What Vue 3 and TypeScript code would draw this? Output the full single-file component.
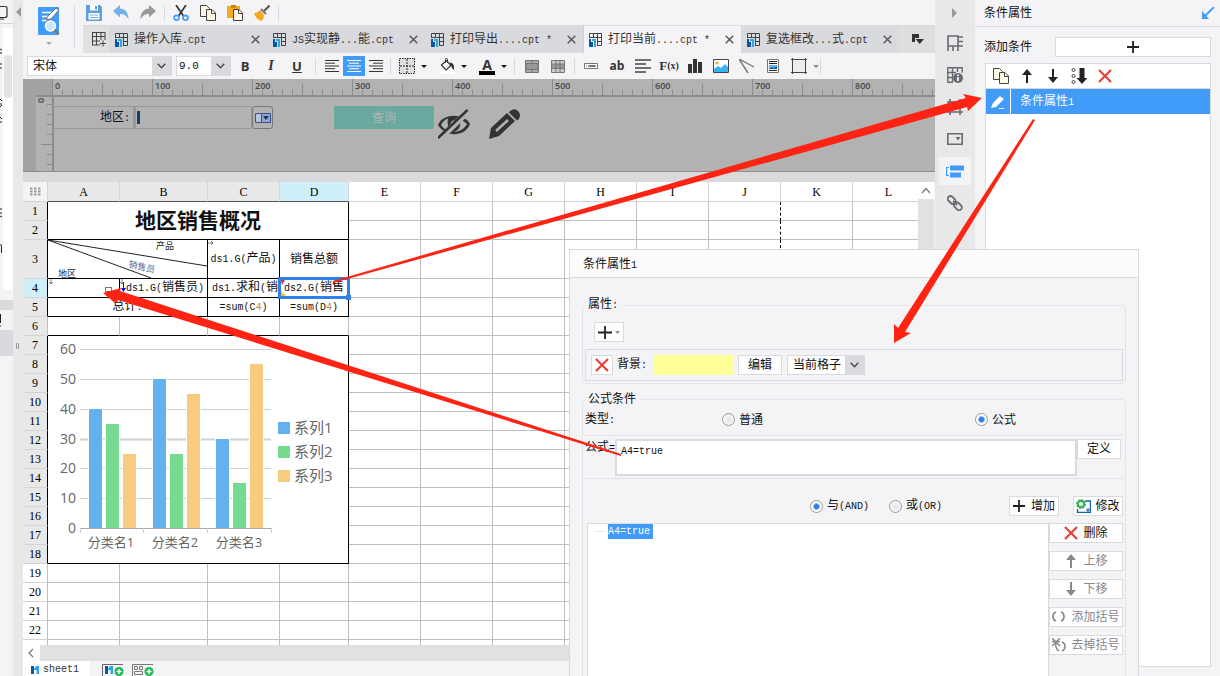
<script setup lang="ts">
import { h, ref, type FunctionalComponent } from 'vue'

// Splits a label into latin and CJK runs so that latin glyphs keep half-width advance.
const Mixed: FunctionalComponent<{ text: string }> = (props) => {
  const runs = props.text.match(/[\x00-\xff]+|[^\x00-\xff]+/g) ?? []
  return h(
    'span',
    { class: 'mixed' },
    runs.map((r) => h('span', { class: r.charCodeAt(0) < 256 ? 'lat' : 'han' }, r)),
  )
}
Mixed.props = ['text']

const tabs = [
  { name: '操作入库.cpt', active: false },
  { name: 'JS实现静...能.cpt', active: false },
  { name: '打印导出....cpt *', active: false },
  { name: '打印当前....cpt *', active: true },
  { name: '复选框改...式.cpt', active: false },
]

const columns = [
  { id: 'A', w: 'c72', state: 'used' },
  { id: 'B', w: 'c88', state: 'used' },
  { id: 'C', w: 'c72', state: 'used' },
  { id: 'D', w: 'c69', state: 'current' },
  { id: 'E', w: 'c72', state: '' },
  { id: 'F', w: 'c72', state: '' },
  { id: 'G', w: 'c72', state: '' },
  { id: 'H', w: 'c72', state: '' },
  { id: 'I', w: 'c72', state: '' },
  { id: 'J', w: 'c72', state: 'pagebreak' },
  { id: 'K', w: 'c72', state: '' },
  { id: 'L', w: 'c72', state: '' },
]
const plain = columns.slice(4)
const rows = Array.from({ length: 23 }, (_, i) => i + 1)

const rulerMarks = Array.from({ length: 200 }, (_, i) => i)
const rulerLabels = Array.from({ length: 9 }, (_, i) => i * 100)
const vMarks = [1, 2, 3, 4, 5, 6, 7]

const series = [
  { name: '系列1', color: '#63b2ee', values: [40, 50, 30] },
  { name: '系列2', color: '#76da91', values: [35, 25, 15] },
  { name: '系列3', color: '#f8cb7f', values: [25, 45, 55] },
]
const ticks = [0, 10, 20, 30, 40, 50, 60]
const yOf = (v: number) => Math.round(191 - v * 2.98)
const categories = ['分类名1', '分类名2', '分类名3']

const kind = ref('formula')
const join = ref('and')
const formula = ref('A4=true')
const font = ref('宋体')
const size = ref('9.0')
const scope = ref('当前格子')
</script>

<template>
  <div class="app">
    <aside class="left">
      <svg width="13" height="676" viewBox="0 0 13 676">
        <rect width="13" height="676" fill="#f4f4f6" />
        <path d="M0 23.5h13" stroke="#d4d4d6" />
        <path d="M0 6.500h5q2 0 2 2v7q0 2-2 2H0M0 19h4" fill="none" stroke="#333" stroke-width="1.200" />
        <rect x="3" y="28" width="10" height="262" fill="#fff" />
        <rect x="4" y="55" width="8" height="43" rx="3" fill="#e4e4e4" />
        <path d="M0 49l2 1M0 53h2M0 64h2M0 68h2M0 99l2 2M0 104h2M0 107l2-2M0 117l2 2M0 122h2M0 209h2M0 213h2M0 216l2 1M0 245h2M1.500 246v7" stroke="#222" />
        <rect y="300" width="13" height="10" fill="#dadadc" />
        <rect y="330" width="13" height="26" fill="#d9dade" />
        <path d="M.5 314v9M0 326h1" stroke="#222" />
      </svg>
    </aside>
    <div class="splitter">
      <svg width="10" height="360" viewBox="0 0 10 360">
        <path d="M8 7v10L3 12z" fill="#999" />
        <path d="M3.500 343v6M5.500 343v6" stroke="#999" />
      </svg>
    </div>

    <main class="main">
      <header class="top">
        <button class="preview" aria-label="预览">
          <svg width="24" height="38" viewBox="0 0 24 38">
            <rect x="0" y="0" width="21" height="28" rx="1" fill="#419bf9" />
            <path d="M4 5.500h11M4 9.500h8M4 13.500h5" stroke="#fff" stroke-width="1.500" />
            <path d="M8 13l2-4 8-8 3 2-8 9z" fill="#fff" stroke="#555" stroke-width=".8" />
            <circle cx="12.500" cy="19" r="5" fill="#cfe3f6" stroke="#fff" stroke-width="1.500" />
            <path d="M16.500 23l4 4" stroke="#777" stroke-width="2.500" />
            <path d="M8 35h6l-3 3z" fill="#aaa" />
          </svg>
        </button>
        <div class="top-right">
          <div class="quick">
            <button aria-label="保存"><svg width="16" height="16" viewBox="0 0 16 16"><path d="M0 0h14l2 2v14H0z" fill="#5f9fdc" /><path d="M4 0h8v5.500H4z" fill="#fff" /><path d="M9 1h2v3.500H9z" fill="#5f9fdc" /><path d="M2.500 8h11v6.500h-11z" fill="#fff" /><path d="M4 10h8M4 12.500h8" stroke="#7aaee0" /></svg></button>
            <button aria-label="撤销"><svg width="16" height="16" viewBox="0 0 16 16"><path d="M0 6L7 0v3.500c5 0 8.500 4 8.500 11C13.500 10.500 11 9 7 9v3.500z" fill="#74b0ea" /></svg></button>
            <button aria-label="重做"><svg width="16" height="16" viewBox="0 0 16 16"><path d="M16 6L9 0v3.500c-5 0-8.500 4-8.500 11C2.500 10.500 5 9 9 9v3.500z" fill="#999" /></svg></button>
            <i class="sep tall"></i>
            <button aria-label="剪切"><svg width="16" height="16" viewBox="0 0 16 16"><path d="M3 0l7.500 11M13 0L5.500 11" stroke="#333" stroke-width="1.700" /><circle cx="3.500" cy="12.700" r="2.400" fill="none" stroke="#419bf9" stroke-width="1.700" /><circle cx="12.500" cy="12.700" r="2.400" fill="none" stroke="#419bf9" stroke-width="1.700" /></svg></button>
            <button aria-label="复制"><svg width="16" height="16" viewBox="0 0 16 16"><path d="M.5.5h6l3 3v8h-9z" fill="#fff8e6" stroke="#444" /><path d="M6.500 4.500h5.500l3.500 3.500v7.500h-9z" fill="#fff8e6" stroke="#444" /><path d="M11.500 4.500v4h4" fill="none" stroke="#444" /></svg></button>
            <button aria-label="粘贴"><svg width="16" height="16" viewBox="0 0 16 16"><path d="M0 1h13v12H0z" fill="#f5a91d" /><path d="M4 0h5v3H4z" fill="#c98400" /><path d="M6.500 4.500h5.500l3.500 3.500v7.500h-9z" fill="#fff8e6" stroke="#444" /><path d="M11.500 4.500v4h4" fill="none" stroke="#444" /></svg></button>
            <button aria-label="格式刷"><svg width="16" height="16" viewBox="0 0 16 16"><path d="M15.500.5L10 6" stroke="#555" stroke-width="2" /><path d="M7 4l5 5" stroke="#777" stroke-width="2" /><path d="M0 8c3 0 4-1 6-3l4 5c0 3-1 5-3 6-3-1-6-4-7-8z" fill="#f5a91d" /></svg></button>
            <i class="sep tall"></i>
          </div>
          <nav class="tabs">
            <button class="newtab" aria-label="新建">
              <svg width="15" height="15" viewBox="0 0 15 15"><path d="M.5 1v12M0 .5h13M4.500 0v13M9 0v8M13 0v8M0 4.500h13M0 9h8M0 13h8M11 8.500v6M8 11.500h6" fill="none" stroke="#444" /></svg>
            </button>
            <div v-for="t in tabs" :key="t.name" class="tab" :class="{ on: t.active }">
              <svg width="13" height="14" viewBox="0 0 13 14"><path d="M.5 5V.5h12v12H8M0 4.500h13M4.500 0v5M8.500 0v13M8 8.500h5" fill="none" stroke="#444" /><path d="M0 6h2v3h2v5H0z" fill="#0b56a4" /><path d="M3 6h4v8H5V8H3z" fill="#2ea7e0" /></svg>
              <Mixed class="tab-name" :text="t.name" />
              <button class="close" aria-label="关闭"><svg width="9" height="9" viewBox="0 0 9 9"><path d="M.7.7l7.600 7.600M8.300.7L.7 8.300" stroke="#555" stroke-width="1.400" /></svg></button>
            </div>
            <button class="more" aria-label="更多"><svg width="13" height="11" viewBox="0 0 13 11"><path d="M0 0h7v4H3v4H0z" fill="#333" /><path d="M3.500 5H12L7.700 10z" fill="#333" /></svg></button>
          </nav>
        </div>
      </header>

      <div class="format">
        <label class="pick font"><select v-model="font" aria-label="字体"><option>宋体</option></select><span class="arr"><svg width="9" height="6" viewBox="0 0 9 6"><path d="M.7.7l3.800 4L8.300.7" fill="none" stroke="#444" stroke-width="1.300" /></svg></span></label>
        <label class="pick size"><select v-model="size" aria-label="字号"><option>9.0</option></select><span class="arr"><svg width="9" height="6" viewBox="0 0 9 6"><path d="M.7.7l3.800 4L8.300.7" fill="none" stroke="#444" stroke-width="1.300" /></svg></span></label>
        <button class="tb"><b>B</b></button>
        <button class="tb"><em>I</em></button>
        <button class="tb"><u>U</u></button>
        <i class="sep wide"></i>
        <button class="tb al" aria-label="左对齐"><svg width="14" height="12" viewBox="0 0 14 12"><path d="M0 .5h14M0 3.200h10M0 6h14M0 8.700h10M0 11.500h14" stroke="#333" /></svg></button>
        <button class="tb al on" aria-label="居中"><svg width="14" height="12" viewBox="0 0 14 12"><path d="M0 .5h14M2 3.200h10M0 6h14M2 8.700h10M0 11.500h14" stroke="#fff" /></svg></button>
        <button class="tb al" aria-label="右对齐"><svg width="14" height="12" viewBox="0 0 14 12"><path d="M0 .5h14M4 3.200h10M0 6h14M4 8.700h10M0 11.500h14" stroke="#333" /></svg></button>
        <i class="sep tight"></i>
        <button class="tb" aria-label="边框"><svg width="16" height="16" viewBox="0 0 16 16"><rect x="1" y="1" width="14" height="14" fill="#e0e0e2" /><path d="M.5 .5h15v15H.5z" fill="none" stroke="#222" stroke-dasharray="1.500 1" /><path d="M8 1v14M1 8h14" stroke="#222" stroke-dasharray="2 1" /></svg></button>
        <button class="caret" aria-label="边框选项"></button>
        <button class="tb" aria-label="填充"><svg width="16" height="16" viewBox="0 0 16 16"><path d="M2.500 7l5-4.500L12 7.500 7 12z" fill="#fff" stroke="#333" stroke-width="1.200" /><path d="M6.500 5V1.500q0-1 1-1t1 1V5" fill="none" stroke="#333" /><path d="M11 4.500c3 0 4.500 3 4 7-2 0-1.500-2.500-3.500-4z" fill="#333" /><path d="M0 13h16v3H0z" fill="#fff" /></svg></button>
        <button class="caret" aria-label="填充选项"></button>
        <button class="tb fc" aria-label="字体颜色"><b>A</b></button>
        <button class="caret" aria-label="颜色选项"></button>
        <i class="sep"></i>
        <button class="tb" aria-label="合并"><svg width="14" height="13" viewBox="0 0 14 13"><path d="M.5.5h13v12H.5zM7 0v3M7 10v3" fill="#aaa" stroke="#777" /><path d="M1 3.500h12v6H1z" fill="#999" stroke="#777" /></svg></button>
        <button class="tb" aria-label="取消合并"><svg width="14" height="13" viewBox="0 0 14 13"><path d="M.5.5h13v12H.5z" fill="#ccc" stroke="#777" /><path d="M1 4h12v4.500H1z" fill="#999" /><path d="M5 0v13M9 0v13M0 4h14M0 8.500h14" stroke="#777" /></svg></button>
        <i class="sep tight"></i>
        <button class="tb" aria-label="文本控件"><svg width="14" height="6" viewBox="0 0 14 6"><path d="M.5.5h13v5H.5z" fill="#fff" stroke="#777" /><path d="M2 3h1M4.500 2.500h7v1h-7z" stroke="#777" fill="none" /></svg></button>
        <button class="tb ab"><b>ab</b></button>
        <button class="tb" aria-label="富文本"><svg width="16" height="14" viewBox="0 0 16 14"><path d="M0 1h16M0 5h11M0 9h16M0 13h11" stroke="#444" stroke-width="1.700" /></svg></button>
        <button class="tb fx"><b>F</b>(x)</button>
        <button class="tb" aria-label="图表"><svg width="14" height="14" viewBox="0 0 14 14"><path d="M0 5h4v9H0zM5 0h4v14H5zM10 3h4v11h-4z" fill="#333" /></svg></button>
        <button class="tb" aria-label="图片"><svg width="16" height="14" viewBox="0 0 16 14"><path d="M.5.5h15v13H.5z" fill="#fff" stroke="#444" /><circle cx="4" cy="4" r="1.600" fill="#f5a91d" /><path d="M1 13v-3l4-3 3 2 4-4 3 3v5z" fill="#36b3f0" /></svg></button>
        <button class="tb" aria-label="斜线"><svg width="16" height="15" viewBox="0 0 16 15"><path d="M0 0l15 8M0 0l9 14" stroke="#777" stroke-width="1.400" /></svg></button>
        <button class="tb" aria-label="子报表"><svg width="12" height="14" viewBox="0 0 12 14"><path d="M.5.5h11v13H.5z" fill="#fff" stroke="#777" /><path d="M2 2.500h8M2 4.500h8M2 11.500h8" stroke="#222" /><path d="M2 6h8v4H2z" fill="#69b4f0" /><path d="M2 10l3-2 2 1 3-2v3z" fill="#0b56a4" /></svg></button>
        <button class="tb" aria-label="悬浮元素"><svg width="16" height="16" viewBox="0 0 16 16"><path d="M1.500 1.500h13v13h-13z" fill="#eee" /><path d="M1.500 0v16M14.500 0v16M0 1.500h16M0 14.500h16" stroke="#444" /></svg></button>
        <button class="caret dim" aria-label="悬浮选项"></button>
        <i class="sep wide"></i>
      </div>

      <section class="designer">
        <svg class="ruler" height="18">
          <rect width="30" height="18" fill="#a3a3a3" />
          <path v-for="m in rulerMarks" :key="m" :d="`M${m * 10 + 29.5} ${m % 10 === 0 ? 0 : m % 5 === 0 ? 5 : 11}V16`" stroke="#8c8c8c" />
          <text v-for="l in rulerLabels" :key="l" :x="l + 32" y="10">{{ l }}</text>
          <rect x="13" y="16" width="100%" height="2" fill="#8c8c8c" />
        </svg>
        <div class="canvas">
          <svg class="vruler" width="31" height="75" viewBox="0 0 31 75">
            <rect width="13" height="75" fill="#a3a3a3" />
            <path v-for="m in vMarks" :key="m" :d="`M${m === 5 ? 18 : 24} ${m * 10 - 2.5}H29`" stroke="#8c8c8c" />
            <path d="M30 0v75" stroke="#8c8c8c" stroke-width="2" />
            <text transform="translate(21 6) rotate(-90)">0</text>
          </svg>
          <div class="form">
            <label class="flabel" for="area"><Mixed text="地区:" /></label>
            <input id="area" class="finput" />
            <button class="fdrop" aria-label="展开"><svg width="16" height="10" viewBox="0 0 16 10"><path d="M.5.5h6v9h-6z" fill="#b8c4dc" stroke="#3a5488" /><path d="M6.500.5h9v9h-9z" fill="#8ea6d0" stroke="#3a5488" /><path d="M8 3h6l-3 4z" fill="#1c2f66" /></svg></button>
            <button class="query">查询</button>
            <svg class="eye" width="32" height="31" viewBox="0 0 32 31"><path d="M0 16C5 4 26 4 32 15 27 28 8 29 0 16z" fill="#333" /><path d="M3 16Q6 10.500 10 9.500q-2 8 4 12.500Q7 22 3 16zM22 11q5 1 7 4.500-5 7-13 7.500 8-3 6-12z" fill="#b2b2b2" /><path d="M16 12q-3 1-3 5" fill="none" stroke="#b2b2b2" stroke-width="1.500" /><path d="M1 30.500L31 1.500" stroke="#b2b2b2" stroke-width="6" /><path d="M0 29L29.500 1" stroke="#333" stroke-width="2.500" /></svg>
            <svg class="pen" width="31" height="31" viewBox="0 0 31 31"><path d="M0 30L2 19 18 4l8 8L10 27z" fill="#333" /><path d="M20 3q5-5 9-1t0 9l-2 1-8-8z" fill="#333" /><path d="M18 2.500L28 12.500" stroke="#b2b2b2" stroke-width="1.500" /><path d="M7 22L19 11" stroke="#b2b2b2" stroke-width="2.500" /></svg>
          </div>
        </div>
      </section>

      <section class="sheet">
        <div class="gridwrap">
          <table class="grid">
            <colgroup><col class="c25" /><col v-for="c in columns" :key="c.id" :class="c.w" /></colgroup>
            <thead>
              <tr>
                <th class="corner"><svg width="11" height="9" viewBox="0 0 11 9"><path d="M0 1.500h11M0 4.500h11M0 7.500h11" stroke="#999" stroke-width="2" stroke-dasharray="2.500 1.500" /></svg></th>
                <th v-for="c in columns" :key="c.id" :class="c.state === 'pagebreak' ? '' : c.state">{{ c.id }}</th>
              </tr>
            </thead>
            <tbody>
              <tr v-for="r in rows" :key="r" :class="{ high: r === 3 }">
                <th :class="{ used: r < 19, current: r === 4, edge: r < 19 && r !== 6 }">{{ r }}</th>
                <td v-if="r === 1" class="title black" colspan="4" rowspan="2">地区销售概况</td>
                <template v-if="r === 3">
                  <td class="black" colspan="2">
                    <svg class="diag" width="159" height="38" viewBox="0 0 159 38"><path d="M0 0l159 26M0 0l103 38" stroke="#222" /><text x="108" y="9">产品</text><text x="80" y="27" transform="rotate(13 80 27)" class="sales">销售员</text><text x="10" y="37">地区</text></svg>
                  </td>
                  <td class="black"><svg class="leaf" width="6" height="6" viewBox="0 0 6 6"><path d="M0 3h5M3 1l2 2-2 2" fill="none" stroke="#777" /></svg><div class="clip"><Mixed text="ds1.G(产品)" /></div></td>
                  <td class="black"><div class="clip">销售总额</div></td>
                </template>
                <template v-if="r === 4">
                  <td class="black"><svg class="leaf" width="6" height="6" viewBox="0 0 6 6"><path d="M3 0v5M1 3l2 2 2-2" fill="none" stroke="#777" /></svg><i class="box"></i></td>
                  <td class="black"><svg class="leaf" width="6" height="14" viewBox="0 0 6 14"><path d="M2 0v5M0 3l2 2 2-2" fill="none" stroke="#777" /><path d="M3.500 3v8" stroke="#00f" /><path d="M1 9h5l-2.500 4z" fill="#00f" /></svg><div class="clip end"><Mixed text="ds1.G(销售员)" /></div></td>
                  <td class="black"><div class="clip start"><Mixed text="ds1.求和(销" /></div></td>
                  <td class="black"><div class="clip start"><Mixed text="ds2.G(销售" /></div><div class="selected"><svg width="5" height="16" viewBox="0 0 5 16"><path d="M0 0h4L1 5z" fill="#c0392b" /><path d="M0 11l5 5H0z" fill="#f5c518" /></svg></div></td>
                </template>
                <template v-if="r === 5">
                  <td class="black" colspan="2"><Mixed text="总计:" /></td>
                  <td class="black"><span class="lat">=sum(C<s>4</s>)</span></td>
                  <td class="black"><span class="lat">=sum(D<s>4</s>)</span></td>
                </template>
                <td v-if="r === 7" class="black" colspan="4" rowspan="12">
                  <svg class="chart" width="300" height="226" viewBox="0 0 300 226">
                    <g v-for="t in ticks" :key="t">
                      <path :d="`M32 ${yOf(t) + 0.5}H223`" :stroke="t ? '#cfcfcf' : '#aaa'" :stroke-width="t === 30 ? 2 : 1" />
                      <text x="28" :y="yOf(t) + 5" text-anchor="end" class="num">{{ t }}</text>
                    </g>
                    <path d="M32.500 191v5M95.500 191v5M159.500 191v5M223.500 191v5" stroke="#ccc" />
                    <template v-for="(s, i) in series" :key="s.name">
                      <rect v-for="(v, j) in s.values" :key="j" :x="40 + i * 17 + Math.round(j * 63.5)" :y="yOf(v) - 1" width="15" :height="192 - yOf(v)" fill="#fff" />
                      <rect v-for="(v, j) in s.values" :key="'b' + j" :x="41 + i * 17 + Math.round(j * 63.5)" :y="yOf(v)" width="13" :height="191 - yOf(v)" :fill="s.color" />
                      <rect x="230" :y="85 + i * 24" width="12" height="12" :fill="s.color" />
                      <text x="246" :y="96 + i * 24" class="leg">{{ s.name }}</text>
                    </template>
                    <text v-for="(c, i) in categories" :key="c" :x="63 + i * 64" y="210" text-anchor="middle" class="cat">{{ c }}</text>
                  </svg>
                </td>
                <template v-if="r === 6 || r > 18">
                  <td v-for="n in 4" :key="n" :class="{ under: r === 6 }"></td>
                </template>
                <td v-for="c in plain" :key="c.id" :class="c.state"></td>
              </tr>
            </tbody>
          </table>
        </div>
        <div class="vscroll"><svg width="16" height="17" viewBox="0 0 16 17"><rect width="16" height="17" fill="#fff" /><path d="M4 11l4-4.500 4 4.500" fill="none" stroke="#777" stroke-width="1.200" /></svg></div>
      </section>
      <div class="hscroll"><svg width="17" height="16" viewBox="0 0 17 16"><rect width="17" height="16" fill="#fff" /><path d="M10 4L6 8l4 4" fill="none" stroke="#777" stroke-width="1.200" /></svg></div>
      <footer class="sheets">
        <button class="sheet-tab"><svg width="8" height="8" viewBox="0 0 8 8"><path d="M0 0h3v8H0z" fill="#0b56a4" /><path d="M3 3l2-3h3v8H5.500V4H3z" fill="#2ea7e0" /></svg><span class="lat">sheet1</span></button>
        <button aria-label="新增报表"><svg width="22" height="12" viewBox="0 0 22 12"><path d="M.5 12V.5H21" fill="none" stroke="#666" /><path d="M3 2h3v8H3z" fill="#0b56a4" /><path d="M6 5l2-3h3v8H8.500V6H6z" fill="#2ea7e0" /><circle cx="17" cy="7.500" r="4.500" fill="#1db954" /><path d="M17 5v5M14.500 7.500h5" stroke="#fff" stroke-width="1.500" /></svg></button>
        <button aria-label="新增聚合块"><svg width="22" height="12" viewBox="0 0 22 12"><path d="M.5 12V.5H21M2.500 2.500h3v3h-3zM7.500 2.500h3v3h-3zM2.500 7.500h8v3h-8z" fill="none" stroke="#777" /><circle cx="17" cy="7.500" r="4.500" fill="#1db954" /><path d="M17 5v5M14.500 7.500h5" stroke="#fff" stroke-width="1.500" /></svg></button>
      </footer>
    </main>

    <nav class="rail">
      <button class="fold" aria-label="收起"><svg width="6" height="10" viewBox="0 0 6 10"><path d="M0 0v10l5-5z" fill="#999" /></svg></button>
      <button aria-label="单元格元素"><svg width="16" height="16" viewBox="0 0 16 16"><path d="M1 1h10v10H1zM1 11v5M6 11v5M11 11v5M11 2h5M11 6.500h5M11 11h5" fill="none" stroke="#666a73" stroke-width="1.600" /></svg></button>
      <button aria-label="单元格属性"><svg width="16" height="16" viewBox="0 0 16 16"><path d="M.8.8h14.400v5M.8 0v15.200H6M0 5.500h9M0 10.500h6M5.500 0v15M10.500 0v5" fill="none" stroke="#666a73" stroke-width="1.400" /><circle cx="11" cy="11" r="5" fill="#666a73" /><path d="M11 10v4M11 7.500v1.500" stroke="#fff" stroke-width="1.700" /></svg></button>
      <button aria-label="悬浮元素"><svg width="16" height="16" viewBox="0 0 16 16"><path d="M3 0v16M13 0v16M0 3h16M0 13h16" stroke="#666a73" stroke-width="1.600" /></svg></button>
      <button aria-label="控件设置"><svg width="16" height="12" viewBox="0 0 16 12"><path d="M.8.8h14.400v10.400H.8z" fill="none" stroke="#666a73" stroke-width="1.600" /><path d="M8.500 4h5L11 7.500z" fill="#666a73" /></svg></button>
      <button class="on" aria-label="条件属性"><svg width="18" height="13" viewBox="0 0 18 13"><path d="M4 .5h14v5H4zM4 7.500h11v5H4z" fill="#419bf9" /><path d="M3 2.500H.6v8H3" fill="none" stroke="#419bf9" stroke-width="1.200" /></svg></button>
      <button aria-label="超级链接"><svg width="16" height="16" viewBox="0 0 16 16" fill="none" stroke="#666a73" stroke-width="1.800"><rect x="-4" y="-2.500" width="9" height="5.500" rx="2.700" transform="translate(4.500 4.500) rotate(45)" /><rect x="-4.500" y="-2.500" width="9" height="5.500" rx="2.700" transform="translate(11 11) rotate(45)" /><path d="M6 6l4 4" /></svg></button>
    </nav>

    <aside class="panel">
      <h2>条件属性<svg width="13" height="12" viewBox="0 0 13 12"><path d="M12 0L2 10" stroke="#419bf9" stroke-width="1.800" /><path d="M0 4v8h7z" fill="#419bf9" /></svg></h2>
      <div class="add-row"><span>添加条件</span><button aria-label="添加条件"><svg width="12" height="12" viewBox="0 0 12 12"><path d="M6 0v12M0 6h12" stroke="#222" stroke-width="1.800" /></svg></button></div>
      <div class="cond">
        <div class="cond-tools">
          <button aria-label="复制"><svg width="16" height="16" viewBox="0 0 16 16"><path d="M.5.5h6l3 3v8h-9z" fill="#fff8e6" stroke="#444" /><path d="M6.500 4.500h5.500l3.500 3.500v7.500h-9z" fill="#fff8e6" stroke="#444" /><path d="M11.500 4.500v4h4" fill="none" stroke="#444" /></svg></button>
          <button aria-label="上移"><svg width="10" height="14" viewBox="0 0 10 14"><path d="M5 3v11" stroke="#222" stroke-width="2" /><path d="M5 0l5 6H0z" fill="#222" /></svg></button>
          <button aria-label="下移"><svg width="10" height="14" viewBox="0 0 10 14"><path d="M5 0v11" stroke="#222" stroke-width="2" /><path d="M5 14l5-6H0z" fill="#222" /></svg></button>
          <button aria-label="排序"><svg width="16" height="16" viewBox="0 0 16 16"><g fill="none" stroke="#444"><circle cx="2.500" cy="2" r="1.500" /><circle cx="2.500" cy="8" r="1.500" /><circle cx="2.500" cy="14" r="1.500" /></g><path d="M8.500 0h5v10h3L11 16 5.500 10h3z" fill="#222" /></svg></button>
          <button aria-label="删除"><svg width="14" height="14" viewBox="0 0 14 14"><path d="M1 1l12 12M13 1L1 13" stroke="#e8403a" stroke-width="2.200" /></svg></button>
        </div>
        <div class="cond-item">
          <span class="edit"><svg width="14" height="14" viewBox="0 0 14 14"><path d="M0 13l2-5 7-7 4 3-8 8z" fill="#fff" /><path d="M8 13.500h5" stroke="#fff" /></svg></span>
          <span class="name"><Mixed text="条件属性1" /></span>
        </div>
      </div>
    </aside>

    <section class="dialog">
      <h3><Mixed text="条件属性1" /></h3>
      <fieldset class="attrs">
        <legend><Mixed text="属性:" /></legend>
        <button class="btn plus" aria-label="添加属性"><svg width="22" height="13" viewBox="0 0 22 13"><path d="M7 0v13M0 6.500h14" stroke="#222" stroke-width="1.800" /><path d="M17 5h5l-2.500 3z" fill="#888" /></svg></button>
        <div class="attr">
          <button class="btn del" aria-label="删除背景"><svg width="14" height="14" viewBox="0 0 14 14"><path d="M1 1l12 12M13 1L1 13" stroke="#e8403a" stroke-width="2.200" /></svg></button>
          <Mixed class="attr-name" text="背景:" />
          <i class="swatch"></i>
          <button class="btn edit-btn">编辑</button>
          <label class="pick scope"><select v-model="scope" aria-label="范围"><option>当前格子</option></select><span class="arr"><svg width="9" height="6" viewBox="0 0 9 6"><path d="M.7.7l3.800 4L8.300.7" fill="none" stroke="#444" stroke-width="1.300" /></svg></span></label>
        </div>
      </fieldset>
      <fieldset class="formula">
        <legend>公式条件</legend>
        <div class="kinds">
          <Mixed text="类型:" />
          <label><input v-model="kind" type="radio" name="kind" value="plain" />普通</label>
          <label><input v-model="kind" type="radio" name="kind" value="formula" />公式</label>
        </div>
        <div class="expr">
          <label for="expr"><Mixed text="公式=" /></label>
          <textarea id="expr" v-model="formula" spellcheck="false"></textarea>
          <button class="btn define">定义</button>
        </div>
        <div class="joins">
          <label><input v-model="join" type="radio" name="join" value="and" /><Mixed text="与(AND)" /></label>
          <label><input v-model="join" type="radio" name="join" value="or" /><Mixed text="或(OR)" /></label>
          <button class="btn mid add"><svg width="12" height="12" viewBox="0 0 12 12"><path d="M6 0v12M0 6h12" stroke="#222" stroke-width="1.800" /></svg>增加</button>
          <button class="btn mid"><svg width="15" height="14" viewBox="0 0 15 14"><path d="M9 2h5.500v11.500h-13V10" fill="#fff" stroke="#1565a8" stroke-width="1.400" /><path d="M11 10h2v2h-2z" fill="none" stroke="#1565a8" /><circle cx="5" cy="5" r="3.200" fill="none" stroke="#35b558" stroke-width="2.200" /><circle cx="5" cy="5" r="4.400" fill="none" stroke="#35b558" stroke-width="1.400" stroke-dasharray="1.700 1.700" /></svg>修改</button>
        </div>
        <div class="tree-row">
          <div class="tree"><i></i><span class="lat">A4=true</span></div>
          <div class="side">
            <button class="btn"><svg width="14" height="14" viewBox="0 0 14 14"><path d="M1 1l12 12M13 1L1 13" stroke="#e8403a" stroke-width="2.200" /></svg>删除</button>
            <button class="btn" disabled><svg width="14" height="14" viewBox="0 0 14 14"><path d="M7 3v11" stroke="#888" stroke-width="2" /><path d="M7 0l5 6H2z" fill="#888" /></svg>上移</button>
            <button class="btn" disabled><svg width="14" height="14" viewBox="0 0 14 14"><path d="M7 0v11" stroke="#888" stroke-width="2" /><path d="M7 14l5-6H2z" fill="#888" /></svg>下移</button>
            <button class="btn" disabled><svg width="14" height="12" viewBox="0 0 14 12"><path d="M4 1Q1 2 1 5.500T4 10M9 1q3 1 3 4.500T9 10" fill="none" stroke="#888" stroke-width="1.700" /></svg>添加括号</button>
            <button class="btn" disabled><svg width="14" height="14" viewBox="0 0 14 14"><path d="M5 4Q3 6 4 9t3 4M10 4q3 1 3 4.500T10 13M0 0l8 8M8 0L0 8M0 3.500h8" fill="none" stroke="#888" stroke-width="1.500" /></svg>去掉括号</button>
          </div>
        </div>
      </fieldset>
    </section>

    <svg class="arrows" width="1220" height="676" viewBox="0 0 1220 676" fill="#ff2313">
      <path d="M333 281L966 98 963 94 982 98 968 111 967 107 333 283z" />
      <path d="M1033 119L898 328 894 324V343L911 333 905 332 1035 120z" />
      <path d="M621 454L120 291 121 288 103 293 115 303 118 300 621 456z" />
    </svg>
  </div>
</template>

<style>
body { overflow: hidden; }
.mixed { white-space: pre; }
.lat { font-family: "Liberation Mono", monospace; font-size: 10px; }
</style>

<style scoped>
.app { position: relative; display: flex; height: 100vh; overflow: hidden; background: #f4f4f6; color: #111; font: 12px/18px "Liberation Serif", "Noto Sans CJK SC", sans-serif; }
.app *, .app *::before { box-sizing: border-box; }
button, select, input, textarea { font: inherit; color: inherit; margin: 0; padding: 0; border: 0; background: none; border-radius: 0; }
svg { display: block; flex: none; }
.left { flex: none; width: 13px; overflow: hidden; background: #f4f4f6; }
.splitter { flex: none; width: 10px; background: #e8e8e8; }
.main { flex: 1; min-width: 0; display: flex; flex-direction: column; }

.top { display: flex; height: 53px; flex: none; }
.preview { flex: none; width: 60px; padding: 7px 0 0 15px; display: flex; position: relative; }
.preview::after { content: ""; position: absolute; right: 8px; top: 6px; width: 1px; height: 42px; background: #d9dade; }
.top-right { flex: 1; min-width: 0; display: flex; flex-direction: column; }
.quick { display: flex; align-items: center; gap: 11px; height: 25px; padding-left: 3px; }
.sep { flex: none; width: 1px; height: 16px; margin: 0 4px; background: #d9dade; }
.sep.wide { margin: 0 5px; }
.sep.tight { margin: 0 3px; }
.caret + .sep { margin-left: 0; }
.sep.tall { margin: 0 -3px; }
.tabs { display: flex; height: 28px; background: #dededf; border-top: 1px solid #d9dade; }
.newtab { flex: none; width: 26px; padding: 0 0 0 9px; background: #e1e1e2; }
.tab { flex: none; width: 158px; display: flex; align-items: center; padding: 0 7px 0 6px; gap: 6px; background: #d9dade; color: #333; }
.tab.on { background: #f4f4f6; border-left: 1px solid #cfcfd2; padding-left: 5px; }
.tab-name { flex: 1; }
.more { flex: none; padding: 0 11px 0 13px; }

.format { flex: none; display: flex; align-items: center; height: 26px; padding-left: 4px; overflow: hidden; }
.pick { display: flex; height: 20px; border: 1px solid #d9dade; background: #fff; }
.pick select { flex: 1; min-width: 0; appearance: none; padding-left: 5px; }
.pick .arr { width: 19px; display: grid; place-items: center; background: #d9dade; pointer-events: none; }
.font { width: 145px; margin-right: 4px; }
.size { width: 55px; margin-right: 1px; }
.size select { padding-left: 2px; font-family: "Liberation Mono", monospace; font-size: 11px; }
.tb { flex: none; width: 26px; height: 20px; display: flex; align-items: center; justify-content: center; color: #333; }
.tb b, .tb u { font-family: "Open Sans", sans-serif; font-size: 13px; font-weight: 700; }
.tb em { font-family: "Liberation Serif", serif; font-size: 14px; font-weight: 700; }
.tb.al { width: 22px; }
.tb.on { background: #419bf9; }
.tb.ab b { font-size: 12px; }
.fc b { border-bottom: 4px solid #000; line-height: 13px; padding: 0 3px; }
.tb.fc b { font-size: 14px; }
.fx { font-family: "Liberation Serif", serif; font-size: 10px; font-weight: 700; }
.tb.fx b { font-family: "Liberation Serif", serif; font-size: 13px; }
.caret { flex: none; width: 8px; height: 20px; margin-right: 6px; display: grid; place-items: center; }
.caret::before { content: ""; border: 3px solid transparent; border-top: 3px solid #111; border-bottom: 0; }
.caret.dim { margin-right: 0; }
.caret.dim::before { border-top-color: #888; }

.designer { flex: none; height: 93px; background: #b2b2b2; border-bottom: 1px solid #8c8c8c; overflow: hidden; }
.ruler { width: 100%; }
.ruler text, .vruler text { font: 600 9px "Open Sans", sans-serif; fill: #444; }
.canvas { display: flex; }
.form { display: flex; align-items: flex-start; padding-top: 9px; }
.flabel { width: 80px; height: 23px; border: 1px solid #999; border-left: 0; padding-right: 3px; text-align: right; line-height: 21px; }
.finput { width: 118px; height: 23px; border: 1px solid #999; border-left: 2px solid #999; background: linear-gradient(#123f6e, #123f6e) 1px 4px / 3px 13px no-repeat; }
.fdrop { width: 21px; height: 23px; border: 1px solid #777; border-radius: 3px; display: grid; place-items: center; }
.query { width: 100px; height: 23px; margin-left: 61px; background: #69a9a0; color: #b5b5b5; }
.eye { margin: 3px 0 0 4px; }
.pen { margin: 3px 0 0 19px; }

.sheet { flex: 1; min-height: 0; display: flex; border-top: 10px solid #dadadc; }
.gridwrap { flex: 1; min-width: 0; overflow: hidden; background: #fff; }
.grid { table-layout: fixed; border-collapse: separate; border-spacing: 0; width: 902px; }
.c25 { width: 25px; } .c72 { width: 72px; } .c88 { width: 88px; } .c69 { width: 69px; }
.grid th, .grid td { height: 19px; padding: 0; line-height: 16px; border-right: 1px solid #bfbfbf; border-bottom: 1px solid #bfbfbf; position: relative; text-align: center; white-space: nowrap; overflow: visible; }
.grid th { font-weight: 400; border-color: #d4d4d8; color: #000; font-family: "Liberation Serif", serif; }
.grid thead th { height: 20px; }
.grid .corner { background: #f4f4f6; }
.corner svg { margin: 0 auto; }
.grid th.used { background: #e8e8e8; }
.grid th.current { background: #cff0fb; }
.grid thead th.used, .grid thead th.current { border-bottom-color: #555; }
.grid tbody th { border-right-color: #bfbfbf; }
.grid tbody th.edge { border-right-color: #000; }
.grid td.black { border-color: #000; }
.grid td.under { border-bottom-color: #000; }
.grid td.pagebreak { border-right: 1px dashed #000; }
.grid .high th, .grid .high td { height: 39px; }
.grid td.title { font-size: 21px; line-height: 30px; font-weight: 700; }
.clip { overflow: hidden; }
.clip.start { text-align: left; padding-left: 4px; }
.clip.end { text-align: right; padding-right: 3px; }
.diag text { font-size: 9px; fill: #222; }
.diag text.sales { fill: #5a6a9a; }
.leaf { position: absolute; left: 0; top: 0; }
.box { position: absolute; right: 7px; top: 8px; width: 7px; height: 5px; border: 1px solid #777; }
.selected { position: absolute; inset: -2px -2px -2px -2px; border: 3px solid #2f7fe8; z-index: 1; }
.selected::after { content: ""; position: absolute; right: -4px; bottom: -4px; width: 5px; height: 5px; background: #2f7fe8; }
s { text-decoration: none; color: #c08a2a; }
.chart text { fill: #666; font-family: "Open Sans", "Noto Sans CJK SC", sans-serif; }
.chart .num { font-size: 14px; }
.chart .leg { font-size: 15px; }
.chart .cat { font-size: 13px; }
.vscroll { flex: none; width: 17px; background: #e1e1e1; border-right: 1px solid #f4f4f6; }
.hscroll { flex: none; height: 16px; background: #e1e1e1; }
.sheets { flex: none; height: 15px; display: flex; gap: 8px; align-items: flex-end; overflow: hidden; }
.sheet-tab { width: 67px; height: 15px; margin-right: 4px; padding: 3px 0 0 8px; display: flex; align-items: center; gap: 4px; background: #fff; color: #333; line-height: 12px; }

.rail { flex: none; width: 40px; background: #e8e8e8; display: flex; flex-direction: column; align-items: center; gap: 4px; }
.rail button { width: 32px; height: 28px; display: grid; place-items: center; }
.rail .fold { height: 25px; }
.rail .on { background: #f4f4f6; }

.panel { flex: none; width: 245px; display: flex; flex-direction: column; padding-bottom: 9px; }
.panel h2 { margin: 0; height: 27px; padding: 0 5px 0 9px; display: flex; justify-content: space-between; align-items: center; border-bottom: 1px solid #d9dade; font-size: 12px; font-weight: 400; }
.add-row { display: flex; align-items: center; padding: 10px 9px 6px; }
.add-row span { width: 71px; }
.add-row button { flex: 1; height: 20px; border: 1px solid #d9dade; background: #fff; display: grid; place-items: center; }
.cond { flex: 1; margin: 0 9px 0 10px; border: 1px solid #d9dade; background: #fff; }
.cond-tools { height: 25px; display: flex; align-items: center; padding-left: 2px; border-bottom: 1px solid #d9dade; }
.cond-tools button { width: 26px; display: grid; place-items: center; }
.cond-item { display: flex; height: 25px; background: #419bf9; color: #fff; }
.edit { width: 25px; display: grid; place-items: center; border-right: 1px solid #fff; }
.name { padding-left: 9px; line-height: 24px; }

.dialog { position: absolute; left: 569px; top: 249px; bottom: 0; width: 570px; background: #f4f4f6; border: 1px solid #d9dade; border-bottom: 0; display: flex; flex-direction: column; }
.dialog h3 { margin: 0; height: 28px; padding-left: 13px; font-size: 12px; font-weight: 400; line-height: 28px; background: #fcfcfc; border-bottom: 1px solid #d9dade; }
fieldset { min-width: 0; margin: 0 12px; border: 1px solid #e4e4e8; border-radius: 5px; padding: 0 2px; }
legend { margin-left: 1px; padding: 0 4px 0 2px; line-height: 18px; }
.attrs { margin-top: 17px; padding-bottom: 2px; }
.btn { flex: none; height: 20px; border: 1px solid #d9dade; background: #fff; display: flex; align-items: center; justify-content: center; line-height: 18px; }
.btn:disabled { color: #888; }
.plus { width: 30px; margin: 7px 0 7px 9px; }
.attr { display: flex; align-items: center; height: 32px; padding-left: 5px; border: 1px solid #d9dade; }
.del { width: 22px; }
.attr-name { width: 36px; margin: 0 0 0 4px; }
.swatch { width: 80px; height: 20px; background: #ffff99; }
.edit-btn { width: 44px; margin: 0 5px; }
.scope { width: 78px; }
.formula { flex: 1; margin-top: 6px; border-bottom: 0; border-radius: 5px 5px 0 0; display: flex; flex-direction: column; }
.kinds { display: flex; align-items: center; height: 28px; padding-bottom: 4px; border-bottom: 1px solid #e4e4e8; }
.kinds > .mixed { flex: none; width: 137px; }
.kinds label { flex: none; width: 253px; }
.kinds label + label { flex: 1; width: auto; }
.kinds label, .joins label { display: flex; align-items: center; gap: 4px; }
input[type="radio"] { appearance: none; flex: none; width: 13px; height: 13px; border: 1px solid #999; border-radius: 50%; background: radial-gradient(#e4e4e4, #fff); }
input[type="radio"]:checked { background: radial-gradient(#2f7fe8 0 2px, #fff 4px); }
.expr { display: flex; height: 43px; padding: 3px 2px 0 0; border-bottom: 1px solid #e4e4e8; }
.expr label { width: 30px; line-height: 16px; }
.expr textarea { flex: 1; height: 37px; border: 2px solid #d9dade; background: #fff; resize: none; outline: 0; padding: 2px 4px; font: 10px/18px "Liberation Mono", monospace; }
.define { width: 44px; }
.joins { display: flex; align-items: center; height: 43px; padding: 12px 0 1px 225px; }
.joins label { width: 79px; }
.joins label + label { flex: 1; }
.mid { width: 50px; gap: 4px; }
.add { margin-right: 14px; gap: 6px; }
.tree-row { flex: 1; display: flex; margin: 1px 0 0 2px; }
.tree { flex: 1; display: flex; align-items: flex-start; padding-left: 7px; border: 1px solid #d9dade; border-bottom: 0; background: #fff; }
.tree i { width: 10px; height: 1px; margin: 7px 3px 0 0; background: #e4e4e8; }
.tree .lat { height: 15px; padding-right: 3px; line-height: 15px; background: #419bf9; color: #fff; }
.side { width: 74px; display: flex; flex-direction: column; gap: 8px; }
.side .btn { gap: 5px; }
.arrows { position: absolute; left: 0; top: 0; pointer-events: none; z-index: 5; }
</style>
